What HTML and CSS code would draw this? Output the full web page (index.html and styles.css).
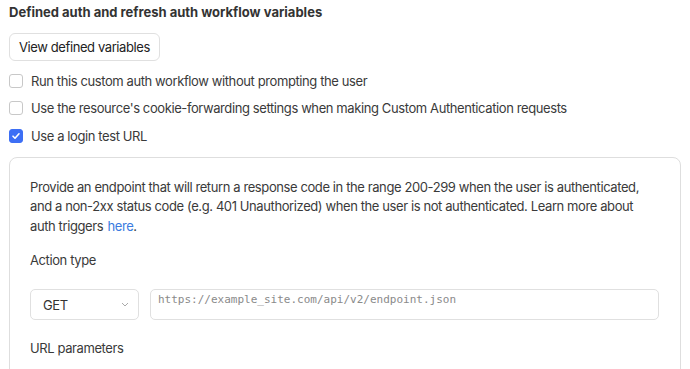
FILE: index.html
```html
<!DOCTYPE html>
<html lang="en">
<head>
    <meta charset="UTF-8">
    <title>Custom auth settings</title>
    <link rel="stylesheet" href="styles.css">
</head>
<body>
    <h3 class="section-title">Defined auth and refresh auth workflow variables</h3>
    <button class="btn" type="button">View defined variables</button>

    <label class="check-row">
        <span class="check"></span>
        Run this custom auth workflow without prompting the user
    </label>
    <label class="check-row">
        <span class="check"></span>
        Use the resource's cookie-forwarding settings when making Custom Authentication requests
    </label>
    <label class="check-row">
        <span class="check checked">
            <svg width="10" height="10" viewBox="0 0 10 10"><path d="M2 5.2l2 2 4-4.4" fill="none" stroke="#fff" stroke-width="1.6" stroke-linecap="round" stroke-linejoin="round"/></svg>
        </span>
        Use a login test URL
    </label>

    <div class="panel">
        <p class="help">Provide an endpoint that will return a response code in the range 200-299 when the user is authenticated, and a non-2xx status code (e.g. 401 Unauthorized) when the user is not authenticated. Learn more about auth triggers <a href="#">here</a>.</p>

        <div class="field-label">Action type</div>
        <div class="action-row">
            <div class="select">
                <span>GET</span>
                <svg width="8" height="5" viewBox="0 0 8 5"><path d="M1 1l3 3 3-3" fill="none" stroke="#aaa" stroke-width="1"/></svg>
            </div>
            <div class="url-input">https://example_site.com/api/v2/endpoint.json</div>
        </div>

        <div class="field-label">URL parameters</div>
    </div>
</body>
</html>
```

FILE: styles.css
```css
body {
    margin: 0;
    padding: 4px 9px 0 9px;
    font-family: Inter, "Noto Sans", sans-serif;
    font-size: 13px;
    letter-spacing: -0.4px;
    color: #3a3a3a;
    background: #fff;
}
.section-title {
    margin: 0;
    font-size: 13px;
    font-weight: 700;
    letter-spacing: 0;
    color: #333;
    line-height: 16px;
}
.btn {
    display: block;
    margin-top: 13px;
    height: 28px;
    padding: 0 9px;
    font-family: inherit;
    font-size: 13px;
    letter-spacing: -0.4px;
    color: #222;
    background: #fff;
    border: 1px solid #e0e0e0;
    border-radius: 6px;
}
.check-row {
    display: flex;
    align-items: center;
    gap: 8px;
    height: 27.5px;
    line-height: 16px;
}
.check-row:first-of-type {
    margin-top: 6px;
}
.check {
    box-sizing: border-box;
    width: 14px;
    height: 14px;
    border: 1px solid #c8c8c8;
    border-radius: 3px;
    display: flex;
    align-items: center;
    justify-content: center;
}
.check.checked {
    background: #3d6ff5;
    border-color: #3d6ff5;
}
.panel {
    margin-top: 7px;
    border: 1px solid #dedede;
    border-radius: 8px;
    padding: 20px;
    height: 240px;
}
.help {
    margin: 0;
    line-height: 19.5px;
}
.help a {
    margin-left: 1px;
    color: #3a7be0;
    text-decoration: none;
}
.field-label {
    margin-top: 16px;
    line-height: 16px;
}
.action-row {
    display: flex;
    gap: 11px;
    margin-top: 21px;
    margin-right: 1px;
}
.select {
    box-sizing: border-box;
    width: 109px;
    height: 31px;
    padding: 0 9px 0 12px;
    border: 1px solid #e0e0e0;
    border-radius: 5px;
    display: flex;
    align-items: center;
    justify-content: space-between;
    color: #333;
}
.url-input {
    flex: 1;
    box-sizing: border-box;
    height: 31px;
    padding: 3px 7px;
    border: 1px solid #e0e0e0;
    border-radius: 5px;
    font-family: "DejaVu Sans Mono", monospace;
    font-size: 11px;
    letter-spacing: 0;
    color: #8a8a8a;
}
.action-row + .field-label {
    margin-top: 20px;
}
```
